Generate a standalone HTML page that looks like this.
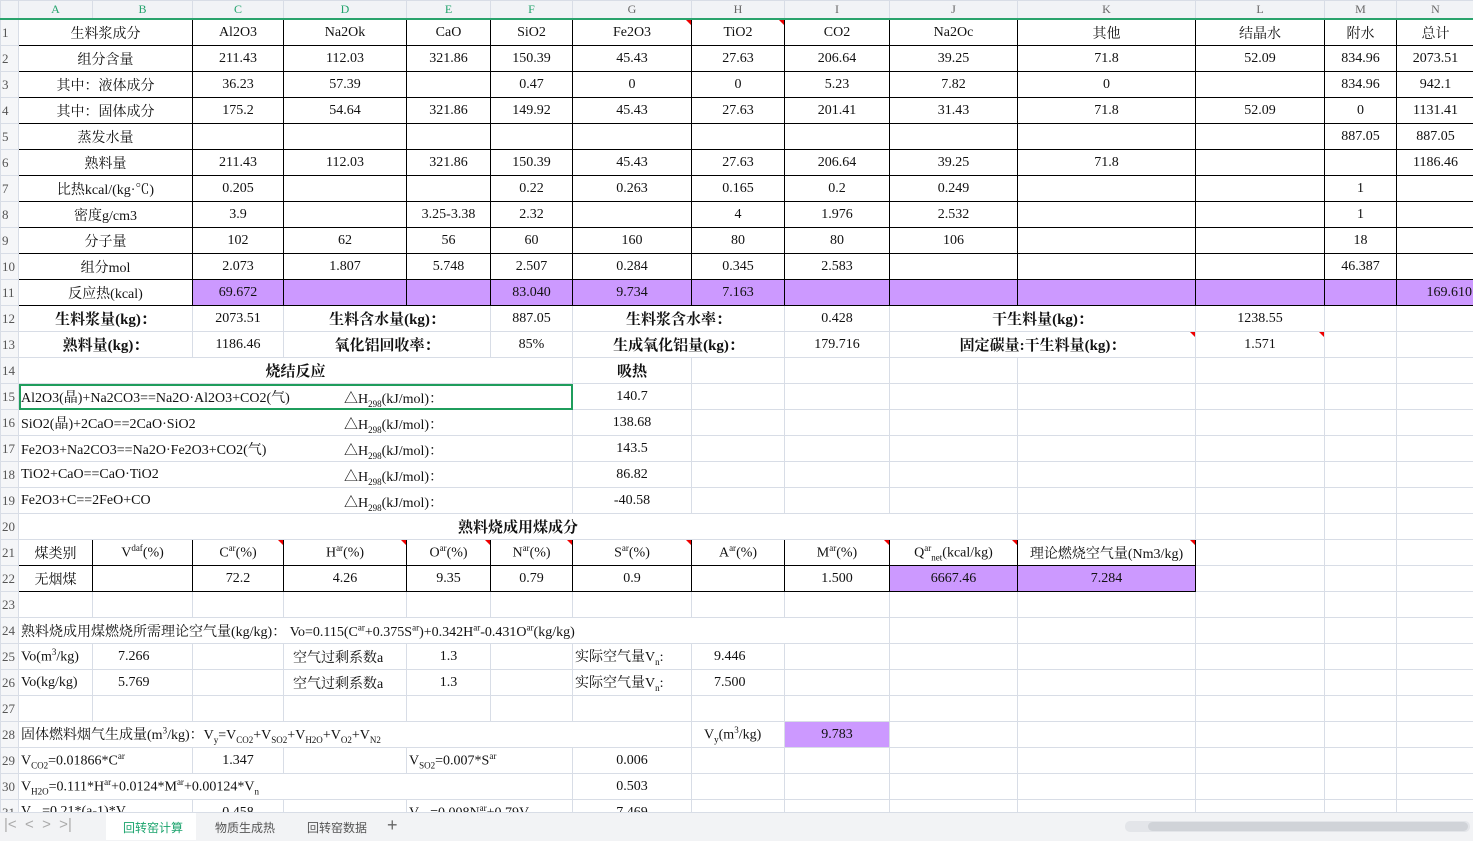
<!DOCTYPE html>
<html><head><meta charset="utf-8"><style>
body{margin:0;width:1473px;height:840px;overflow:hidden;background:#fff;font-family:"Liberation Serif","Noto Serif CJK SC",serif;}
#wrap{position:absolute;left:0;top:0;width:1473px;height:812px;overflow:hidden;}
table{border-collapse:collapse;table-layout:fixed;width:1474px;}
td{height:25px;padding:0 2px;border:1px solid #d8dde6;font-size:14px;white-space:nowrap;overflow:hidden;text-align:center;color:#111;position:relative;}
tr.h td{height:17px;background:#f1f3f6;color:#22a36c;font-size:12px;border-color:#d8dde6;border-bottom:2px solid #2aa36c;}
td.r{background:#f5f6f8;color:#555;font-size:13px;text-align:left;padding:0 0 0 1px;border-color:#d8dde6;}
td.k{border:1px solid #000;}
td.p{background:#cc99ff;}
td.b{font-weight:bold;font-size:15px;}
td.l{text-align:left;}
td.sel{outline:2px solid #1f9d5c;outline-offset:-2px;}
.ab{position:absolute;top:4px;}
sup,sub{font-size:9px;}
.tri{position:absolute;right:0;top:0;width:0;height:0;border-left:5px solid transparent;border-top:5px solid #e00;}
#tabs{position:absolute;left:0;top:812px;width:1473px;height:28px;background:#f2f3f5;border-top:1px solid #d8dde6;font-family:"Liberation Sans","Noto Sans CJK SC",sans-serif;font-size:12px;color:#555;}
#tabs span{position:absolute;top:6px;}
</style></head><body><div id="wrap"><table>
<colgroup><col style="width:18px"><col style="width:74px"><col style="width:100px"><col style="width:91px"><col style="width:123px"><col style="width:84px"><col style="width:82px"><col style="width:119px"><col style="width:93px"><col style="width:105px"><col style="width:128px"><col style="width:178px"><col style="width:129px"><col style="width:72px"><col style="width:78px"></colgroup>
<tr class="h"><td class="r" style="background:#f1f3f6"></td><td>A</td><td>B</td><td>C</td><td>D</td><td>E</td><td>F</td><td style="color:#666">G</td><td style="color:#666">H</td><td style="color:#666">I</td><td style="color:#666">J</td><td style="color:#666">K</td><td style="color:#666">L</td><td style="color:#666">M</td><td style="color:#666">N</td></tr>
<tr><td class="r">1</td><td class="k" colspan="2">生料浆成分</td><td class="k">Al2O3</td><td class="k">Na2Ok</td><td class="k">CaO</td><td class="k">SiO2</td><td class="k">Fe2O3<i class="tri"></i></td><td class="k">TiO2<i class="tri"></i></td><td class="k">CO2</td><td class="k">Na2Oc</td><td class="k">其他</td><td class="k">结晶水</td><td class="k">附水</td><td class="k">总计</td></tr>
<tr><td class="r">2</td><td class="k" colspan="2">组分含量</td><td class="k">211.43</td><td class="k">112.03</td><td class="k">321.86</td><td class="k">150.39</td><td class="k">45.43</td><td class="k">27.63</td><td class="k">206.64</td><td class="k">39.25</td><td class="k">71.8</td><td class="k">52.09</td><td class="k">834.96</td><td class="k">2073.51</td></tr>
<tr><td class="r">3</td><td class="k" colspan="2">其中：液体成分</td><td class="k">36.23</td><td class="k">57.39</td><td class="k"></td><td class="k">0.47</td><td class="k">0</td><td class="k">0</td><td class="k">5.23</td><td class="k">7.82</td><td class="k">0</td><td class="k"></td><td class="k">834.96</td><td class="k">942.1</td></tr>
<tr><td class="r">4</td><td class="k" colspan="2">其中：固体成分</td><td class="k">175.2</td><td class="k">54.64</td><td class="k">321.86</td><td class="k">149.92</td><td class="k">45.43</td><td class="k">27.63</td><td class="k">201.41</td><td class="k">31.43</td><td class="k">71.8</td><td class="k">52.09</td><td class="k">0</td><td class="k">1131.41</td></tr>
<tr><td class="r">5</td><td class="k" colspan="2">蒸发水量</td><td class="k"></td><td class="k"></td><td class="k"></td><td class="k"></td><td class="k"></td><td class="k"></td><td class="k"></td><td class="k"></td><td class="k"></td><td class="k"></td><td class="k">887.05</td><td class="k">887.05</td></tr>
<tr><td class="r">6</td><td class="k" colspan="2">熟料量</td><td class="k">211.43</td><td class="k">112.03</td><td class="k">321.86</td><td class="k">150.39</td><td class="k">45.43</td><td class="k">27.63</td><td class="k">206.64</td><td class="k">39.25</td><td class="k">71.8</td><td class="k"></td><td class="k"></td><td class="k">1186.46</td></tr>
<tr><td class="r">7</td><td class="k" colspan="2">比热kcal/(kg·℃)</td><td class="k">0.205</td><td class="k"></td><td class="k"></td><td class="k">0.22</td><td class="k">0.263</td><td class="k">0.165</td><td class="k">0.2</td><td class="k">0.249</td><td class="k"></td><td class="k"></td><td class="k">1</td><td class="k"></td></tr>
<tr><td class="r">8</td><td class="k" colspan="2">密度g/cm3</td><td class="k">3.9</td><td class="k"></td><td class="k">3.25-3.38</td><td class="k">2.32</td><td class="k"></td><td class="k">4</td><td class="k">1.976</td><td class="k">2.532</td><td class="k"></td><td class="k"></td><td class="k">1</td><td class="k"></td></tr>
<tr><td class="r">9</td><td class="k" colspan="2">分子量</td><td class="k">102</td><td class="k">62</td><td class="k">56</td><td class="k">60</td><td class="k">160</td><td class="k">80</td><td class="k">80</td><td class="k">106</td><td class="k"></td><td class="k"></td><td class="k">18</td><td class="k"></td></tr>
<tr><td class="r">10</td><td class="k" colspan="2">组分mol</td><td class="k">2.073</td><td class="k">1.807</td><td class="k">5.748</td><td class="k">2.507</td><td class="k">0.284</td><td class="k">0.345</td><td class="k">2.583</td><td class="k"></td><td class="k"></td><td class="k"></td><td class="k">46.387</td><td class="k"></td></tr>
<tr><td class="r">11</td><td class="k" colspan="2">反应热(kcal)</td><td class="k p">69.672</td><td class="k p"></td><td class="k p"></td><td class="k p">83.040</td><td class="k p">9.734</td><td class="k p">7.163</td><td class="k p"></td><td class="k p"></td><td class="k p"></td><td class="k p"></td><td class="k p"></td><td class="k p" style="text-align:right">169.610</td></tr>
<tr><td class="r">12</td><td class="b" colspan="2">生料浆量(kg)：</td><td>2073.51</td><td class="b" colspan="2">生料含水量(kg)：</td><td>887.05</td><td class="b" colspan="2">生料浆含水率：</td><td>0.428</td><td class="b" colspan="2">干生料量(kg)：</td><td>1238.55</td><td></td><td></td></tr>
<tr><td class="r">13</td><td class="b" colspan="2">熟料量(kg)：</td><td>1186.46</td><td class="b" colspan="2">氧化铝回收率：</td><td>85%</td><td class="b" colspan="2">生成氧化铝量(kg)：</td><td>179.716</td><td class="b" colspan="2">固定碳量:干生料量(kg)：<i class="tri"></i></td><td>1.571<i class="tri"></i></td><td></td><td></td></tr>
<tr><td class="r">14</td><td class="b" colspan="6">烧结反应</td><td class="b">吸热</td><td></td><td></td><td></td><td></td><td></td><td></td><td></td></tr>
<tr><td class="r">15</td><td class="l sel" colspan="6">Al2O3(晶)+Na2CO3==Na2O·Al2O3+CO2(气)<span class="ab" style="left:325px">△H<sub>298</sub>(kJ/mol)：</span></td><td>140.7</td><td></td><td></td><td></td><td></td><td></td><td></td><td></td></tr>
<tr><td class="r">16</td><td class="l" colspan="6">SiO2(晶)+2CaO==2CaO·SiO2<span class="ab" style="left:325px">△H<sub>298</sub>(kJ/mol)：</span></td><td>138.68</td><td></td><td></td><td></td><td></td><td></td><td></td><td></td></tr>
<tr><td class="r">17</td><td class="l" colspan="6">Fe2O3+Na2CO3==Na2O·Fe2O3+CO2(气)<span class="ab" style="left:325px">△H<sub>298</sub>(kJ/mol)：</span></td><td>143.5</td><td></td><td></td><td></td><td></td><td></td><td></td><td></td></tr>
<tr><td class="r">18</td><td class="l" colspan="6">TiO2+CaO==CaO·TiO2<span class="ab" style="left:325px">△H<sub>298</sub>(kJ/mol)：</span></td><td>86.82</td><td></td><td></td><td></td><td></td><td></td><td></td><td></td></tr>
<tr><td class="r">19</td><td class="l" colspan="6">Fe2O3+C==2FeO+CO<span class="ab" style="left:325px">△H<sub>298</sub>(kJ/mol)：</span></td><td>-40.58</td><td></td><td></td><td></td><td></td><td></td><td></td><td></td></tr>
<tr><td class="r">20</td><td class="b" colspan="10">熟料烧成用煤成分</td><td></td><td></td><td></td><td></td></tr>
<tr><td class="r">21</td><td class="k">煤类别</td><td class="k">V<sup>daf</sup>(%)</td><td class="k">C<sup>ar</sup>(%)<i class="tri"></i></td><td class="k">H<sup>ar</sup>(%)<i class="tri"></i></td><td class="k">O<sup>ar</sup>(%)<i class="tri"></i></td><td class="k">N<sup>ar</sup>(%)<i class="tri"></i></td><td class="k">S<sup>ar</sup>(%)<i class="tri"></i></td><td class="k">A<sup>ar</sup>(%)</td><td class="k">M<sup>ar</sup>(%)<i class="tri"></i></td><td class="k">Q<sup>ar</sup><sub>net</sub>(kcal/kg)<i class="tri"></i></td><td class="k">理论燃烧空气量(Nm3/kg)<i class="tri"></i></td><td></td><td></td><td></td></tr>
<tr><td class="r">22</td><td class="k">无烟煤</td><td class="k"></td><td class="k">72.2</td><td class="k">4.26</td><td class="k">9.35</td><td class="k">0.79</td><td class="k">0.9</td><td class="k"></td><td class="k">1.500</td><td class="k p">6667.46</td><td class="k p">7.284</td><td></td><td></td><td></td></tr>
<tr><td class="r">23</td><td></td><td></td><td></td><td></td><td></td><td></td><td></td><td></td><td></td><td></td><td></td><td></td><td></td><td></td></tr>
<tr><td class="r">24</td><td class="l" colspan="9">熟料烧成用煤燃烧所需理论空气量(kg/kg)：&nbsp;Vo=0.115(C<sup>ar</sup>+0.375S<sup>ar</sup>)+0.342H<sup>ar</sup>-0.431O<sup>ar</sup>(kg/kg)</td><td></td><td></td><td></td><td></td><td></td></tr>
<tr><td class="r">25</td><td class="l">Vo(m<sup>3</sup>/kg)</td><td class="l" style="padding-left:25px">7.266</td><td></td><td class="l" style="padding-left:9px">空气过剩系数a</td><td>1.3</td><td></td><td class="l">实际空气量V<sub>n</sub>:</td><td class="l" style="padding-left:22px">9.446</td><td></td><td></td><td></td><td></td><td></td><td></td></tr>
<tr><td class="r">26</td><td class="l">Vo(kg/kg)</td><td class="l" style="padding-left:25px">5.769</td><td></td><td class="l" style="padding-left:9px">空气过剩系数a</td><td>1.3</td><td></td><td class="l">实际空气量V<sub>n</sub>:</td><td class="l" style="padding-left:22px">7.500</td><td></td><td></td><td></td><td></td><td></td><td></td></tr>
<tr><td class="r">27</td><td></td><td></td><td></td><td></td><td></td><td></td><td></td><td></td><td></td><td></td><td></td><td></td><td></td><td></td></tr>
<tr><td class="r">28</td><td class="l" colspan="7">固体燃料烟气生成量(m<sup>3</sup>/kg)：V<sub>y</sub>=V<sub>CO2</sub>+V<sub>SO2</sub>+V<sub>H2O</sub>+V<sub>O2</sub>+V<sub>N2</sub></td><td class="l" style="padding-left:12px">V<sub>y</sub>(m<sup>3</sup>/kg)</td><td class="p">9.783</td><td></td><td></td><td></td><td></td><td></td></tr>
<tr><td class="r">29</td><td class="l" colspan="2">V<sub>CO2</sub>=0.01866*C<sup>ar</sup></td><td>1.347</td><td></td><td class="l" colspan="2">V<sub>SO2</sub>=0.007*S<sup>ar</sup></td><td>0.006</td><td></td><td></td><td></td><td></td><td></td><td></td><td></td></tr>
<tr><td class="r">30</td><td class="l" colspan="6">V<sub>H2O</sub>=0.111*H<sup>ar</sup>+0.0124*M<sup>ar</sup>+0.00124*V<sub>n</sub></td><td>0.503</td><td></td><td></td><td></td><td></td><td></td><td></td><td></td></tr>
<tr><td class="r">31</td><td class="l" colspan="2">V<sub>O2</sub>=0.21*(a-1)*V</td><td>0.458</td><td></td><td class="l" colspan="2">V<sub>N2</sub>=0.008N<sup>ar</sup>+0.79V</td><td>7.469</td><td></td><td></td><td></td><td></td><td></td><td></td><td></td></tr>
</table></div>
<div id="tabs">
<span style="left:4px;color:#aaa;font-size:15px;top:3px">|&lt; &nbsp;&lt; &nbsp;&gt; &nbsp;&gt;|</span>
<div style="position:absolute;left:106px;top:0;width:90px;height:27px;background:#fff"></div>
<span style="left:123px;color:#1aa36c">回转窑计算</span>
<span style="left:215px">物质生成热</span>
<span style="left:307px">回转窑数据</span>
<span style="left:387px;font-size:18px;top:2px;color:#666">+</span>
<div style="position:absolute;left:1125px;top:8px;width:345px;height:11px;background:#e3e5e9;border-radius:5px"></div>
<div style="position:absolute;left:1148px;top:9px;width:320px;height:9px;background:#d0d3d8;border-radius:5px"></div>
</div>
</body></html>
